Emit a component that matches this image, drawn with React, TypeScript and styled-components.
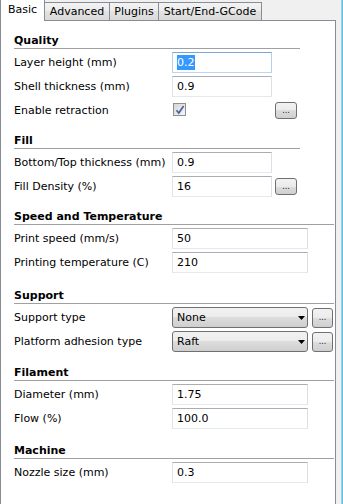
import React from 'react';
import styled, { createGlobalStyle, css } from 'styled-components';

const GlobalStyle = createGlobalStyle`
  html, body {
    margin: 0;
    padding: 0;
    background: #f0f0f0;
  }
  body {
    font-family: 'DejaVu Sans', 'Liberation Sans', sans-serif;
    font-size: 11px;
    color: #000;
  }
`;

const Window = styled.div`
  display: flex;
  width: 343px;
  height: 504px;
  overflow: hidden;
  background: #f0f0f0;
`;

const Main = styled.div`
  display: flex;
  flex-direction: column;
  width: 336px;
  flex: none;
`;

const Gutter = styled.div`
  width: 5px;
  flex: none;
`;

const Edge = styled.div`
  width: 2px;
  flex: none;
  background: linear-gradient(to right, #a9dcf1, #4fb4df);
`;

const TabBar = styled.div`
  display: flex;
  align-items: flex-end;
  height: 20px;
  border-bottom: 1px solid #898c95;
`;

const Tab = styled.div<{ $active?: boolean; $width: number }>`
  box-sizing: border-box;
  width: ${(p) => p.$width}px;
  flex: none;
  text-align: center;
  line-height: 13px;
  white-space: nowrap;
  border-right: 1px solid #898c95;

  ${(p) =>
    p.$active
      ? css`
          height: 21px;
          margin-bottom: -1px;
          padding-top: 3px;
          background: #fff;
          border-left: 1px solid #898c95;
        `
      : css`
          height: 18px;
          padding-top: 2px;
          border-top: 1px solid #898c95;
          background: linear-gradient(#f3f3f3, #ebebeb 50%, #e2e2e2 50%, #dadada);
        `}
`;

const Panel = styled.div`
  flex: 1;
  background: #fff;
  border-left: 1px solid #898c95;
  border-right: 1px solid #898c95;
  padding: 0 1px 0 13px;
`;

const Section = styled.section<{ $gap: number }>`
  margin-top: ${(p) => p.$gap}px;
`;

const Header = styled.div<{ $narrow?: boolean }>`
  width: ${(p) => (p.$narrow ? '286px' : 'auto')};
  font-weight: bold;
  line-height: 13px;
  padding-bottom: 1px;
  border-bottom: 1px solid #a0a0a0;
  margin-bottom: 3px;
`;

const Row = styled.div`
  display: flex;
  align-items: center;
  height: 21px;
  margin-bottom: 3px;
`;

const Label = styled.span`
  width: 158px;
  flex: none;
  white-space: nowrap;
  line-height: 20px;
  padding-top: 1px;
`;

const TextBox = styled.div<{ $width: number; $focused?: boolean }>`
  box-sizing: border-box;
  width: ${(p) => p.$width}px;
  height: 21px;
  flex: none;
  border: 1px solid;
  border-color: ${(p) =>
    p.$focused ? '#7aa7d6 #b3d0ec #bcd6ee #b3d0ec' : '#abadb3 #dbdfe6 #e3e9ef #e2e3ea'};
  padding: 1px 0 0 4px;
  line-height: 18px;
  white-space: nowrap;
`;

const Selected = styled.span`
  background: #3399ff;
  color: #fff;
  padding: 1px 0 1px 0;
`;

const Slot = styled.div<{ $width: number }>`
  width: ${(p) => p.$width}px;
  flex: none;
  display: flex;
  align-items: center;
`;

const CheckBox = styled.span`
  box-sizing: border-box;
  width: 13px;
  height: 13px;
  margin: -2px 0 0 1px;
  border: 1px solid #8e8f8f;
  background: linear-gradient(135deg, #d6d6d6, #f6f6f6);
  display: flex;
  align-items: center;
  justify-content: center;
`;

const DotsButton = styled.button<{ $wide?: boolean }>`
  box-sizing: border-box;
  flex: none;
  width: ${(p) => (p.$wide ? '22px' : '21px')};
  height: ${(p) => (p.$wide ? '17px' : '20px')};
  margin-left: ${(p) => (p.$wide ? '3px' : '4px')};
  padding: 0;
  border: 1px solid #707070;
  border-radius: 3px;
  background: linear-gradient(#f2f2f2, #ebebeb 50%, #dddddd 50%, #cfcfcf);
  font-family: 'DejaVu Sans', sans-serif;
  font-size: 8px;
  line-height: 10px;
  color: #1a1a1a;
`;

const Select = styled.div`
  box-sizing: border-box;
  width: 136px;
  height: 21px;
  flex: none;
  display: flex;
  align-items: center;
  padding: 1px 2px 0 4px;
  border: 1px solid #707070;
  border-radius: 3px;
  background: linear-gradient(#f2f2f2, #ebebeb 50%, #dddddd 50%, #cfcfcf);
  line-height: 18px;
`;

const Arrow = styled.svg`
  margin-left: auto;
  margin-top: -1px;
`;

const Check = () => (
  <svg width='10' height='10' viewBox='0 0 10 10'>
    <path d='M1.5 5.2 L3.8 8 L8.6 1' fill='none' stroke='#4a64a3' strokeWidth='1.7' />
  </svg>
);

type FieldProps = { label: string; value: string; width: number; focused?: boolean; more?: boolean };

const Field: React.FC<FieldProps> = ({ label, value, width, focused, more }) => (
  <Row>
    <Label>{label}</Label>
    <TextBox $width={width} $focused={focused}>
      {focused ? <Selected>{value}</Selected> : value}
    </TextBox>
    {more && <DotsButton $wide>...</DotsButton>}
  </Row>
);

const Choice: React.FC<{ label: string; value: string }> = ({ label, value }) => (
  <Row>
    <Label>{label}</Label>
    <Select>
      {value}
      <Arrow width='7' height='4' viewBox='0 0 7 4'>
        <path d='M0 0 H7 L3.5 4 Z' fill='#000' />
      </Arrow>
    </Select>
    <DotsButton>...</DotsButton>
  </Row>
);

const App: React.FC = () => {
  return (
    <Window>
      <GlobalStyle />
      <Main>
        <TabBar>
          <Tab $active $width={45}>Basic</Tab>
          <Tab $width={65}>Advanced</Tab>
          <Tab $width={49}>Plugins</Tab>
          <Tab $width={103}>Start/End-GCode</Tab>
        </TabBar>
        <Panel>
          <Section $gap={13}>
            <Header $narrow>Quality</Header>
            <Field label='Layer height (mm)' value='0.2' width={100} focused />
            <Field label='Shell thickness (mm)' value='0.9' width={100} />
            <Row>
              <Label>Enable retraction</Label>
              <Slot $width={100}>
                <CheckBox>
                  <Check />
                </CheckBox>
              </Slot>
              <DotsButton $wide>...</DotsButton>
            </Row>
          </Section>

          <Section $gap={13}>
            <Header $narrow>Fill</Header>
            <Field label='Bottom/Top thickness (mm)' value='0.9' width={100} />
            <Field label='Fill Density (%)' value='16' width={100} more />
          </Section>

          <Section $gap={13}>
            <Header>Speed and Temperature</Header>
            <Field label='Print speed (mm/s)' value='50' width={136} />
            <Field label='Printing temperature (C)' value='210' width={136} />
          </Section>

          <Section $gap={16}>
            <Header>Support</Header>
            <Choice label='Support type' value='None' />
            <Choice label='Platform adhesion type' value='Raft' />
          </Section>

          <Section $gap={14}>
            <Header>Filament</Header>
            <Field label='Diameter (mm)' value='1.75' width={136} />
            <Field label='Flow (%)' value='100.0' width={136} />
          </Section>

          <Section $gap={15}>
            <Header>Machine</Header>
            <Field label='Nozzle size (mm)' value='0.3' width={136} />
          </Section>
        </Panel>
      </Main>
      <Gutter />
      <Edge />
    </Window>
  );
};

export default App;
